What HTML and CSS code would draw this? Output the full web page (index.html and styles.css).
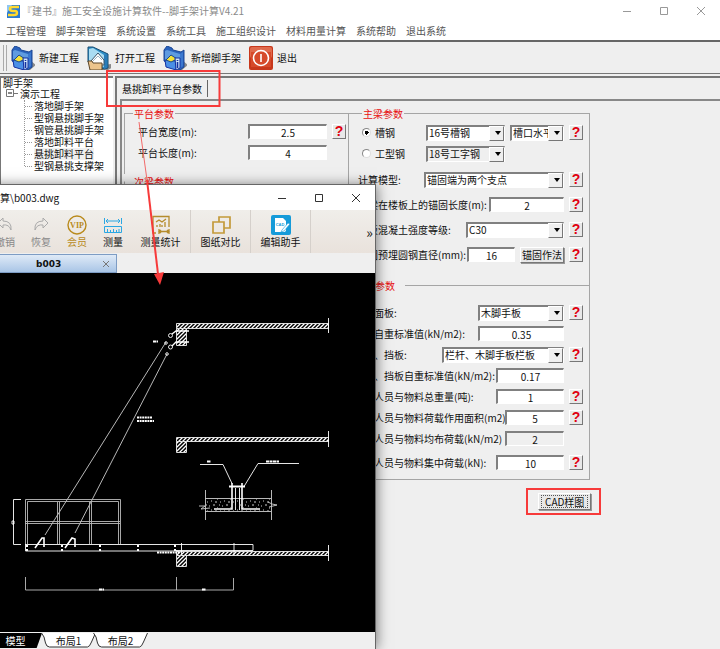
FILE: index.html
```html
<!DOCTYPE html>
<html lang="zh-CN">
<head>
<meta charset="utf-8">
<title>『建书』施工安全设施计算软件</title>
<link rel="stylesheet" href="styles.css">
</head>
<body>
<svg class="defs" aria-hidden="true">
  <symbol id="project" viewBox="0 0 24 24">
    <path d="M19 14l6 5-6 5h-7z" fill="#8a8a8a"/>
    <path d="M1 4l3-4 5 2 1 2 8 2 3-2v17l-4 3L1 15z" fill="#2a63bd" stroke="#1b4796"/>
    <path d="M2 5l2-1 13 4v13L2 15z" fill="#5f9be0"/>
    <path d="M17 8l3-2v14l-3 2z" fill="#3b78cf"/>
    <path d="M2 14l11 1v9l-10-3z" fill="#4a8fe6" stroke="#1431a0"/>
    <path d="M3 14l5-5 6 4-6 3z" fill="#f5e23a" stroke="#1b4a8a"/>
    <path d="M12 12h5v10l-4 2z" fill="#cfe6fa" stroke="#1431a0"/>
    <path d="M14.500 14v1M14.500 16v6" stroke="#1431a0" stroke-width="1.600"/>
  </symbol>
  <symbol id="open" viewBox="0 0 24 24">
    <path d="M17 19l7-1 2 3-5 3h-8z" fill="#8a8a8a"/>
    <path d="M1 1h5l15 7v14l-4 1L1 16z" fill="#2c8ec6" stroke="#174a70"/>
    <path d="M2 3l4-1 11 7v12L2 15z" fill="#a9dcf2"/>
    <path d="M17 9l3-1v14l-3 1z" fill="#2a7cb8"/>
    <path d="M4 15l7-8 6 7v5H4z" fill="#fff" stroke="#38566a"/>
    <path d="M6 15l5-5 4 4" fill="none" stroke="#9cb5c4"/>
    <path d="M1 15h4l1 2h9v7H3z" fill="#ecc48c" stroke="#5d4628"/>
  </symbol>
</svg>

<div class="app">
  <header class="titlebar">
    <svg class="logo" viewBox="0 0 13 13"><rect width="13" height="13" fill="#2b7bd0"/><path d="M0 0h5L0 8z" fill="#8fc6f2"/><path d="M12 2H6Q3 2 3 4t3 2h2q2 0 2 2t-3 2H1" fill="none" stroke="#ffd92e" stroke-width="2.4"/></svg>
    <h1 class="titlebar__text">『建书』施工安全设施计算软件--脚手架计算V4.21</h1>
    <div class="winbtns">
      <button aria-label="最小化"><svg viewBox="0 0 10 10"><path d="M1 5.500h8"/></svg></button>
      <button aria-label="最大化"><svg viewBox="0 0 10 10"><path d="M1.500 1.500h7v7h-7z"/></svg></button>
      <button aria-label="关闭"><svg viewBox="0 0 10 10"><path d="M1 1l8 8M9 1l-8 8"/></svg></button>
    </div>
  </header>
  <nav class="menubar">
    <button>工程管理</button><button>脚手架管理</button><button>系统设置</button><button>系统工具</button><button>施工组织设计</button><button>材料用量计算</button><button>系统帮助</button><button>退出系统</button>
  </nav>
  <div class="toolbar">
    <span class="toolbar__grip"></span>
    <button><svg viewBox="0 0 24 24"><use href="#project"/></svg>新建工程</button>
    <button><svg viewBox="0 0 24 24"><use href="#open"/></svg>打开工程</button>
    <button><svg viewBox="0 0 24 24"><use href="#project"/></svg>新增脚手架</button>
    <button><svg viewBox="0 0 24 24"><rect width="24" height="24" rx="2" fill="#c8381c"/><rect x="1" y="1" width="22" height="11" rx="2" fill="#e06a4c"/><rect x="2" y="6" width="20" height="15" fill="#d64a2b"/><circle cx="12" cy="12" r="7.500" fill="none" stroke="#fff" stroke-width="1.600"/><path d="M12 8v8" stroke="#fff" stroke-width="1.600"/></svg>退出</button>
  </div>

  <main class="main">
    <aside class="tree">
      <div class="tree__root">脚手架</div>
      <div class="tree__node"><svg viewBox="0 0 12 11"><path d="M.5 1.500h7v7h-7zM8 5.500h4" fill="none" stroke="#777"/><path d="M2 5h4" stroke="#111"/></svg>演示工程</div>
      <ul class="tree__list">
        <li>落地脚手架</li><li>型钢悬挑脚手架</li><li>钢管悬挑脚手架</li><li>落地卸料平台</li><li><span class="tree__current">悬挑卸料平台</span></li><li>型钢悬挑支撑架</li>
      </ul>
    </aside>

    <section class="tabs">
      <div class="tabs__bar"><button class="tabs__tab">悬挑卸料平台参数</button></div>
      <form class="pane">
        <div class="columns">
          <div class="column column--left">
            <fieldset class="group group--platform">
              <legend>平台参数</legend>
              <div class="row"><label for="pw">平台宽度(m):</label><input id="pw" class="w-m" value="2.5"><button type="button" class="help">?</button></div>
              <div class="row"><label for="pl">平台长度(m):</label><input id="pl" class="w-m" value="4"><span class="help-space"></span></div>
            </fieldset>
            <fieldset class="group group--secondary">
              <legend>次梁参数</legend>
            </fieldset>
          </div>
          <div class="column">
            <fieldset class="group group--beam">
              <legend>主梁参数</legend>
              <div class="row"><label class="radio"><input type="radio" name="steel" checked>槽钢</label>
                <span class="select w-m"><select aria-label="槽钢型号"><option>16号槽钢</option></select></span>
                <span class="select w-s"><select aria-label="槽口方向"><option>槽口水平</option></select></span><button type="button" class="help">?</button></div>
              <div class="row"><label class="radio"><input type="radio" name="steel">工型钢</label>
                <span class="select select--off w-m"><select aria-label="工字钢型号"><option>18号工字钢</option></select></span><span class="w-s"></span><span class="help-space"></span></div>
              <div class="row row--tall row--first"><label for="model">计算模型:</label><span class="select w-xl"><select id="model"><option>锚固端为两个支点</option></select></span><button type="button" class="help">?</button></div>
              <div class="row row--tall"><label for="anchor">主梁在楼板上的锚固长度(m):</label><input id="anchor" class="w-l2" value="2"><button type="button" class="help">?</button></div>
              <div class="row row--tall"><label for="grade">楼板混凝土强度等级:</label><span class="select w-xl2"><select id="grade"><option>C30</option></select></span><button type="button" class="help">?</button></div>
              <div class="row row--tall"><label for="dia">锚固预埋圆钢直径(mm):</label><input id="dia" class="w-xs" value="16"><button type="button" class="push">锚固作法</button><button type="button" class="help">?</button></div>
            </fieldset>
            <fieldset class="group group--load">
              <legend>荷载参数</legend>
              <div class="row"><label for="board">平台面板:</label><span class="select w-l"><select id="board"><option>木脚手板</option></select></span><button type="button" class="help">?</button></div>
              <div class="row"><label for="bw">面板自重标准值(kN/m2):</label><input id="bw" class="w-l" value="0.35"><span class="help-space"></span></div>
              <div class="row"><label for="rail">栏杆、挡板:</label><span class="select w-2l"><select id="rail"><option>栏杆、木脚手板栏板</option></select></span><button type="button" class="help">?</button></div>
              <div class="row"><label for="rw">栏杆、挡板自重标准值(kN/m2):</label><input id="rw" class="w-r" value="0.17"><span class="help-space"></span></div>
              <div class="row"><label for="tot">施工人员与物料总重量(吨):</label><input id="tot" class="w-r" value="1"><button type="button" class="help">?</button></div>
              <div class="row"><label for="area">施工人员与物料荷载作用面积(m2)</label><input id="area" class="w-n" value="5"><button type="button" class="help">?</button></div>
              <div class="row"><label for="uni">施工人员与物料均布荷载(kN/m2)</label><input id="uni" class="w-n" value="2" readonly><span class="help-space"></span></div>
              <div class="row row--first"><label for="pt">施工人员与物料集中荷载(kN):</label><input id="pt" class="w-r" value="10"><button type="button" class="help">?</button></div>
            </fieldset>
            <button type="button" class="push push--cad"><span>CAD样图</span></button>
          </div>
        </div>
      </form>
    </section>
  </main>
</div>

<section class="cad">
  <header class="cad__title"><span>算\b003.dwg</span>
    <div class="winbtns winbtns--cad">
      <button aria-label="最小化"><svg viewBox="0 0 10 10"><path d="M1 5.500h8"/></svg></button>
      <button aria-label="最大化"><svg viewBox="0 0 10 10"><path d="M1.500 1.500h7v7h-7z"/></svg></button>
      <button aria-label="关闭"><svg viewBox="0 0 10 10"><path d="M1 1l8 8M9 1l-8 8"/></svg></button>
    </div>
  </header>
  <div class="cad__tools">
    <button class="tool tool--off"><svg viewBox="0 0 20 20"><path d="M8 3L3 8l5 5v-3q6-1 8 5 1-9-8-9z" fill="none" stroke="#aaa"/></svg>撤销</button>
    <button class="tool tool--off"><svg viewBox="0 0 20 20"><path d="M12 3l5 5-5 5v-3q-6-1-8 5-1-9 8-9z" fill="none" stroke="#aaa"/></svg>恢复</button>
    <button class="tool tool--vip"><svg viewBox="0 0 20 20"><circle cx="10" cy="10" r="9" fill="none" stroke="#b98a1c" stroke-width="1.400"/><text x="10" y="13" text-anchor="middle" class="vip">VIP</text></svg>会员</button>
    <button class="tool"><svg viewBox="0 0 20 20"><path d="M1.500 3v6M18.500 3v6M3 6h14M5 4L3 6l2 2M15 4l2 2-2 2M1.500 11.500h17v6h-17zM4.500 14v3M7.500 15v2M10.500 14v3M13.500 15v2M16 14v3" fill="none" stroke="#2aa7e3"/></svg>测量</button>
    <button class="tool tool--wide"><svg viewBox="0 0 20 20"><path d="M2 14V1.500h16V12M2 14v4h3M8 16.500h10M8 14v5M18 14v5M10 15l-2 1.500L10 18M16 15l2 1.500-2 1.500M6 12v-2M9 12V9M11 12v-2M14 12V7M5 7l3-2 3 2 4-3" fill="none" stroke="#b58c2c" stroke-width="1.300"/></svg>测量统计</button>
    <button class="tool tool--wide"><svg viewBox="0 0 20 20"><path d="M8 7V2h11v11h-6M2 7h11v11H2z" fill="none" stroke="#c39a3a" stroke-width="1.700"/></svg>图纸对比</button>
    <button class="tool tool--wide"><svg viewBox="0 0 20 20"><rect width="20" height="20" rx="2" fill="#169bd9"/><path d="M4 3h8l3 3v9q0 2-2 2H4z" fill="#fff"/><text x="9" y="11" text-anchor="middle" class="cadmark">CAD</text><path d="M11 15l6-7 2 1-6 7-3 1z" fill="#fff" stroke="#169bd9" stroke-width=".6"/></svg>编辑助手</button>
    <button class="more">»</button>
  </div>
  <div class="cad__files"><button class="file"><span>b003</span><svg viewBox="0 0 8 8"><path d="M1 1l6 6M7 1L1 7" stroke="#777"/></svg></button></div>
  <svg class="drawing" viewBox="-13 273 388 359" role="img" aria-label="b003 图纸">
    <defs>
      <pattern id="hatch" width="4" height="4" patternUnits="userSpaceOnUse"><path d="M-1 5L5-1M-1 1l2-2M3 5l2-2" stroke="#fff" stroke-width="1.300"/></pattern>
      <pattern id="specks" width="13" height="9" patternUnits="userSpaceOnUse"><path d="M1 2h1M5 1h2M9 4h1M3 6h1M7 7h2M11 1h1M12 7h1" stroke="#ccc"/></pattern>
    </defs>
    <rect x="-13" y="273" width="388" height="359" fill="#000"/>
    <g fill="url(#hatch)" stroke="#ddd">
      <path d="M176.500 323.500h152v5h-152zM176.500 328.500h10v17h-10z"/>
      <path d="M176.500 437.500h152v4h-152zM176.500 441.500h10v11h-10z"/>
      <path d="M176.500 551.500h152v4h-152zM176.500 555.500h10v11h-10z"/>
    </g>
    <g fill="none" stroke="#fff" stroke-width=".9">
      <path d="M328.500 318v15M328.500 431v16M328.500 545v16"/>
      <path d="M45 535L166 342M75 533L167 354" stroke="#ccc"/>
      <path d="M172 334l4-3h13M172 346l4-4h13" stroke-width="1.300"/>
      <circle cx="170.500" cy="335.500" r="2"/><circle cx="170.500" cy="347" r="2"/>
      <circle cx="166" cy="343" r="1.300"/><circle cx="167" cy="354" r="1.300"/>
      <path d="M25.500 544V499.500h95V544M27.500 544V501.500h91V544M25 521.500h95M25 523.500h95M57.500 502v42M59.500 502v42M89.500 502v42M91.500 502v42" stroke="#bbb"/>
      <path d="M21 499.500h-7.500v45H21M12 521h2v3h-2z"/>
      <path d="M25 544.500h228v6M25.500 544v7h152"/>
      <path d="M26 546h2M26 550h2M61 546h2M61 550h2M99 546h2M99 550h2M137 546h2M137 550h2M174 546h2M174 550h2" stroke-width="2"/>
      <path d="M253 550.500H176M181.500 543v12M234 543v12"/>
      <path d="M35 548l7-10 2 0v9M65 548l7-10 3 1v8" stroke-width="1.600"/>
      <path d="M25.500 577v13h208v-12M176.500 577v13" stroke="#bbb"/>
      <path d="M200 464.500h23l9 19M299 463.500h-41l-14 23"/>
      <path d="M205.500 490v30M271.500 490v30M205 498.500h66M205 511.500h66M199 506h6l-4 3 9-1M268 502l4 2 5 1-8 2" stroke="#ccc"/>
      <path d="M229 486.500h16" stroke-width="2"/><path d="M232 483v26h-18M242 483v26h18" stroke-width="1.600"/><path d="M235.500 488v22M239.500 488v22"/>
      <path d="M153 341.500h5M207 461.500h4M266 461.500h13M99 589.500h5M202 589.500h4" stroke-width="2" stroke-dasharray="3 .5"/>
      <path d="M137 417.500h15M137 421h17M157 552.500h22" stroke-width="2" stroke-dasharray="2 .6"/>
    </g>
    <path d="M206 499h65v12h-65z" fill="url(#specks)"/>
  </svg>
  <div class="sheets">
    <button class="sheet sheet--on"><svg viewBox="0 0 55 15" preserveAspectRatio="none"><path d="M0 0h55l-7 15H0z" fill="#000"/></svg><span>模型</span></button>
    <button class="sheet"><svg viewBox="0 0 55 15"><path d="M.5 0q3 3 4 10 1 4 4 4h38q2 0 4-5l4-9" fill="#fff" stroke="#333"/></svg><span>布局1</span></button>
    <button class="sheet"><svg viewBox="0 0 55 15"><path d="M.5 0q3 3 4 10 1 4 4 4h38q2 0 4-5l4-9" fill="#fff" stroke="#333"/></svg><span>布局2</span></button>
  </div>
</section>

<svg class="marks" viewBox="0 0 720 649" aria-hidden="true">
  <path d="M107 71h112.500v35H107zM527 489h73v25h-73z" fill="none" stroke="#f73a3a" stroke-width="2"/>
  <path d="M139 122l8 58" stroke="#f26a6a" stroke-width="1" fill="none"/>
  <path d="M147 180l11 94" stroke="#f73a3a" stroke-width="2" fill="none"/>
  <path d="M154 274l10-2-4 13z" fill="#f73a3a"/>
</svg>
</body>
</html>
```
FILE: styles.css
```css
* { box-sizing: border-box; }

body {
  margin: 0;
  height: 100vh;
  overflow: hidden;
  position: relative;
  background: #efefef;
  color: #111;
  font: 10px/12px "Noto Sans CJK SC", "Noto Sans", sans-serif;
}

button, input, select { font: inherit; color: inherit; }
button { margin: 0; padding: 0; border: 0; background: none; white-space: nowrap; }
.defs { display: none; }

.app { display: flex; flex-direction: column; height: 100%; }

/* Title bar and menu */
.titlebar { display: flex; align-items: center; height: 22px; padding-left: 7px; background: #fff; color: #8a8a8a; }
.logo { width: 13px; height: 13px; }
.titlebar__text { margin: 0 auto 0 2px; font-size: 10px; font-weight: 400; }
.winbtns { display: flex; gap: 27px; padding-right: 14px; }
.winbtns button { display: flex; }
.winbtns svg { width: 10px; height: 10px; fill: none; stroke: #999; }
.menubar { display: flex; gap: 10px; height: 18px; padding: 0 6px; background: #fff; color: #555; }

/* Main toolbar */
.toolbar {
  display: flex;
  align-items: center;
  gap: 8px;
  height: 34px;
  border-top: 2px solid #666;
  border-bottom: 1px solid #777;
}
.toolbar__grip { width: 4px; height: 26px; margin: 0 -4px 0 3px; border: solid #aaa; border-width: 0 1px; }
.toolbar button { display: flex; align-items: center; gap: 4px; }
.toolbar svg { width: 24px; height: 24px; overflow: visible; }

.main { display: flex; flex: 1; gap: 2px; padding-top: 2px; }

/* Project tree */
.tree { width: 113px; padding-left: 2px; border: solid #777; border-width: 2px 0 0 1px; background: #fff; }
.tree__root { line-height: 10px; }
.tree__node { display: flex; gap: 2px; padding-left: 3px; line-height: 12px; }
.tree__node svg { width: 12px; height: 11px; }
.tree__list { margin: 0 0 0 21px; padding: 0; list-style: none; border-left: 1px dotted #999; height: 66px; }
.tree__list li { display: flex; align-items: center; gap: 2px; height: 12px; line-height: 12px; }
.tree__list li::before { content: ""; width: 7px; border-top: 1px dotted #999; }
.tree__current { background: #efefef; }

/* Tab page */
.tabs { flex: 1; display: flex; flex-direction: column; border: solid #777; border-width: 2px 0 0 2px; }
.tabs__bar { display: flex; height: 21px; padding: 2px 0 2px 5px; }
.tabs__tab { padding-right: 5px; border-right: 1px solid #666; }
.pane { flex: 1; margin-left: 3px; padding: 5px 0 0 2px; border: solid #888; border-width: 2px 0 0 2px; }
.columns { display: grid; grid-template-columns: 224px 242px; }
.column { display: flex; flex-direction: column; }

.group { min-width: 0; margin: 0; border: 1px solid #a5a5a5; }
.group legend { height: 14px; margin: 0; padding: 0 1px; line-height: 16px; color: #e81010; }
.group--platform { padding: 1px 2px 11px 8px; border-width: 1px 0 0 1px; }
.group--secondary { flex: 1; padding: 0 8px; border-width: 1px 0 0 1px; border-top-color: #efefef; }
.group--platform .row { padding-left: 5px; }
.group--beam { padding: 2px 6px 18px 9px; border-bottom: 0; }
.group--beam legend { margin-left: 4px; }
.group--load { margin-top: -7px; padding: 10px 6px 6px 5px; }
.group--load legend { padding-right: 10px; }

.row { display: flex; align-items: center; gap: 5px; height: 21px; }
.row--tall { height: 25px; }
.row--first { margin-top: 3px; }
.row label { flex: 1; min-width: 0; white-space: nowrap; }
.row .radio { display: flex; align-items: center; gap: 4px; padding-left: 4px; }
.radio input {
  appearance: none;
  width: 9px;
  height: 9px;
  margin: 0;
  border: 1px solid;
  border-color: #888 #ddd #ddd #888;
  border-radius: 50%;
  background: #fff;
}
.radio input:checked { background: radial-gradient(#000 0 2px, #fff 2px); }

/* Fields */
.row > input, .select {
  height: 15px;
  border: solid;
  border-width: 2px 1px 1px 2px;
  border-color: #808080 #fff #fff #808080;
  background: #fff;
}
.row > input { padding: 0; border-radius: 0; text-align: center; outline: 0; }
.row > input[readonly], .select--off { background: #efefef; }
.select { display: grid; grid-template: 100% / 100%; align-items: center; height: 16px; }
.select select {
  grid-area: 1 / 1;
  appearance: none;
  width: 100%;
  height: 100%;
  padding: 0 0 0 1px;
  border: 0;
  background: none;
  line-height: 12px;
}
.select::before, .select::after { content: ""; grid-area: 1 / 1; justify-self: end; pointer-events: none; z-index: 1; }
.select::before { width: 13px; height: 100%; background: #efefef; border: 1px solid; border-color: #fff #777 #777 #fff; }
.select::after { margin-right: 3px; border: 3px solid transparent; border-top: 4px solid #000; border-bottom: 0; }

.w-xs { width: 48px; }
.w-s { width: 54px; }
.w-n { width: 59px; }
.w-r { width: 68px; }
.w-m { width: 79px; }
.w-l2 { width: 75px; }
.w-l { width: 86px; }
.w-xl2 { width: 98px; }
.w-2l { width: 122px; }
.w-xl { width: 140px; }
.w-xs, .w-s, .w-n, .w-r, .w-m, .w-l2, .w-l, .w-xl2, .w-2l, .w-xl { flex: none; }

.help, .help-space { flex: none; width: 14px; height: 15px; }
.help, .push { border: 1px solid; border-color: #fff #777 #777 #fff; background: #e8e8e8; }
.help { color: #e00010; font: bold 14px/13px "Liberation Sans", sans-serif; }
.push { height: 16px; padding: 0 1px; line-height: 13px; box-shadow: 1px 1px 0 #999; }
.push--cad { align-self: flex-start; height: 17px; margin: 13px 0 0 190px; padding: 1px 2px; }
.push--cad span { display: block; padding: 0 3px; border: 1px dotted #555; line-height: 11px; }

/* Drawing viewer window */
.cad {
  position: absolute;
  top: 185px;
  bottom: 0;
  left: -13px;
  width: 388px;
  display: flex;
  flex-direction: column;
  background: #efefef;
  box-shadow: 0 0 0 1px #666, 2px 0 12px rgba(0, 0, 0, .5);
}
.cad__title { display: flex; align-items: center; justify-content: space-between; height: 25px; padding-left: 13px; background: #fff; }
.winbtns--cad svg { stroke: #333; }
.cad__tools { display: flex; height: 43px; background: linear-gradient(#f0eeea, #e9e2dc); }
.tool { display: flex; flex-direction: column; align-items: center; gap: 1px; width: 36px; padding-top: 5px; }
.tool svg { width: 20px; height: 20px; }
.tool--wide { width: 60px; border-right: 1px solid #d5d0cb; }
.tool--off { color: #888; }
.tool--vip { color: #b98a1c; }
.vip { font: bold 8px "Liberation Serif", serif; fill: #b98a1c; }
.cadmark { font: bold 4px "Liberation Sans", sans-serif; fill: #169bd9; }
.more { margin-left: auto; padding-right: 2px; font-size: 14px; }
.cad__files { height: 20px; padding-top: 1px; }
.file {
  display: flex;
  align-items: center;
  justify-content: space-between;
  width: 130px;
  height: 19px;
  padding: 0 6px 0 48px;
  border: 1px solid #7d9cc4;
  background: linear-gradient(#dfeaf7, #a9c5e6);
  font: bold 9px "DejaVu Sans", sans-serif;
}
.file svg { width: 8px; height: 8px; }
.drawing { display: block; width: 100%; height: auto; }
.sheets { display: flex; padding: 1px 0 0 13px; }
.sheet { display: grid; width: 55px; margin-right: -3px; }
.sheet svg, .sheet span { grid-area: 1 / 1; }
.sheet svg { width: 100%; height: 15px; }
.sheet span { z-index: 1; line-height: 15px; }
.sheet--on { width: 42px; margin-right: -1px; color: #fff; }
.sheet--on span { padding-right: 11px; }

.marks { position: absolute; top: 0; left: 0; width: 720px; height: 649px; pointer-events: none; }
```
